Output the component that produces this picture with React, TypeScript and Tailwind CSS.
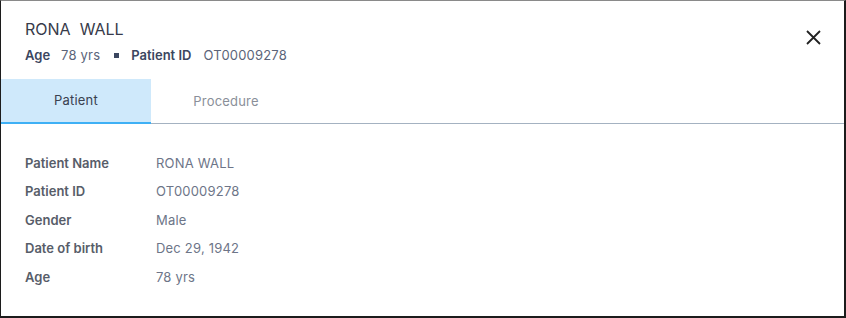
export default function App() {
  const rows: [string, string][] = [
    ["Patient Name", "RONA WALL"],
    ["Patient ID", "OT00009278"],
    ["Gender", "Male"],
    ["Date of birth", "Dec 29, 1942"],
    ["Age", "78 yrs"],
  ]

  return (
    <div
      className="w-[846px] h-[318px] bg-white border-t border-l border-r-2 border-b-2 border-[#1c1c1c] border-t-[#8a8a8a] overflow-hidden"
      style={{ fontFamily: "Inter, 'Noto Sans', sans-serif" }}
    >
      <div className="flex justify-between items-start pl-6 pr-[23px] pt-4 pb-[14px]">
        <div>
          <div className="text-[16px] leading-6 text-[#383b4a] whitespace-pre">RONA  WALL</div>
          <div className="mt-1 flex items-center text-[13px] leading-5 tracking-[0.2px]">
            <span className="font-semibold text-[#3b4660] tracking-normal">Age</span>
            <span className="ml-[11px] text-[#5b6479]">78 yrs</span>
            <span className="ml-[14px] w-[5px] h-[5px] bg-[#3b4660]" />
            <span className="ml-[12px] font-semibold text-[#3b4660] tracking-normal">Patient ID</span>
            <span className="ml-[12px] text-[#5b6479]">OT00009278</span>
          </div>
        </div>
        <button className="mt-[13px] text-[#222]">
          <svg width="15" height="15" viewBox="0 0 15 15" fill="none" stroke="currentColor" strokeWidth="1.8">
            <path d="M1 1l13 13M14 1L1 14" />
          </svg>
        </button>
      </div>

      <div className="flex h-[45px] border-b border-[#a4b2c1] text-[13px] tracking-[0.2px]">
        <div className="w-[150px] -mb-px pt-px flex items-center justify-center bg-[#cfe9fb] border-b-2 border-[#3fb0f5] text-[#3a4150]">
          Patient
        </div>
        <div className="w-[150px] pt-px flex items-center justify-center text-[#8a8f99]">Procedure</div>
      </div>

      <div className="pl-6 pt-[28.5px] grid grid-cols-[131px_1fr] gap-y-[8.5px] text-[13px] leading-5">
        {rows.map(([k, v]) => (
          <div key={k} className="contents">
            <div className="font-semibold text-[#575d69]">{k}</div>
            <div className="text-[#6d7588] tracking-[0.2px]">{v}</div>
          </div>
        ))}
      </div>
    </div>
  )
}
